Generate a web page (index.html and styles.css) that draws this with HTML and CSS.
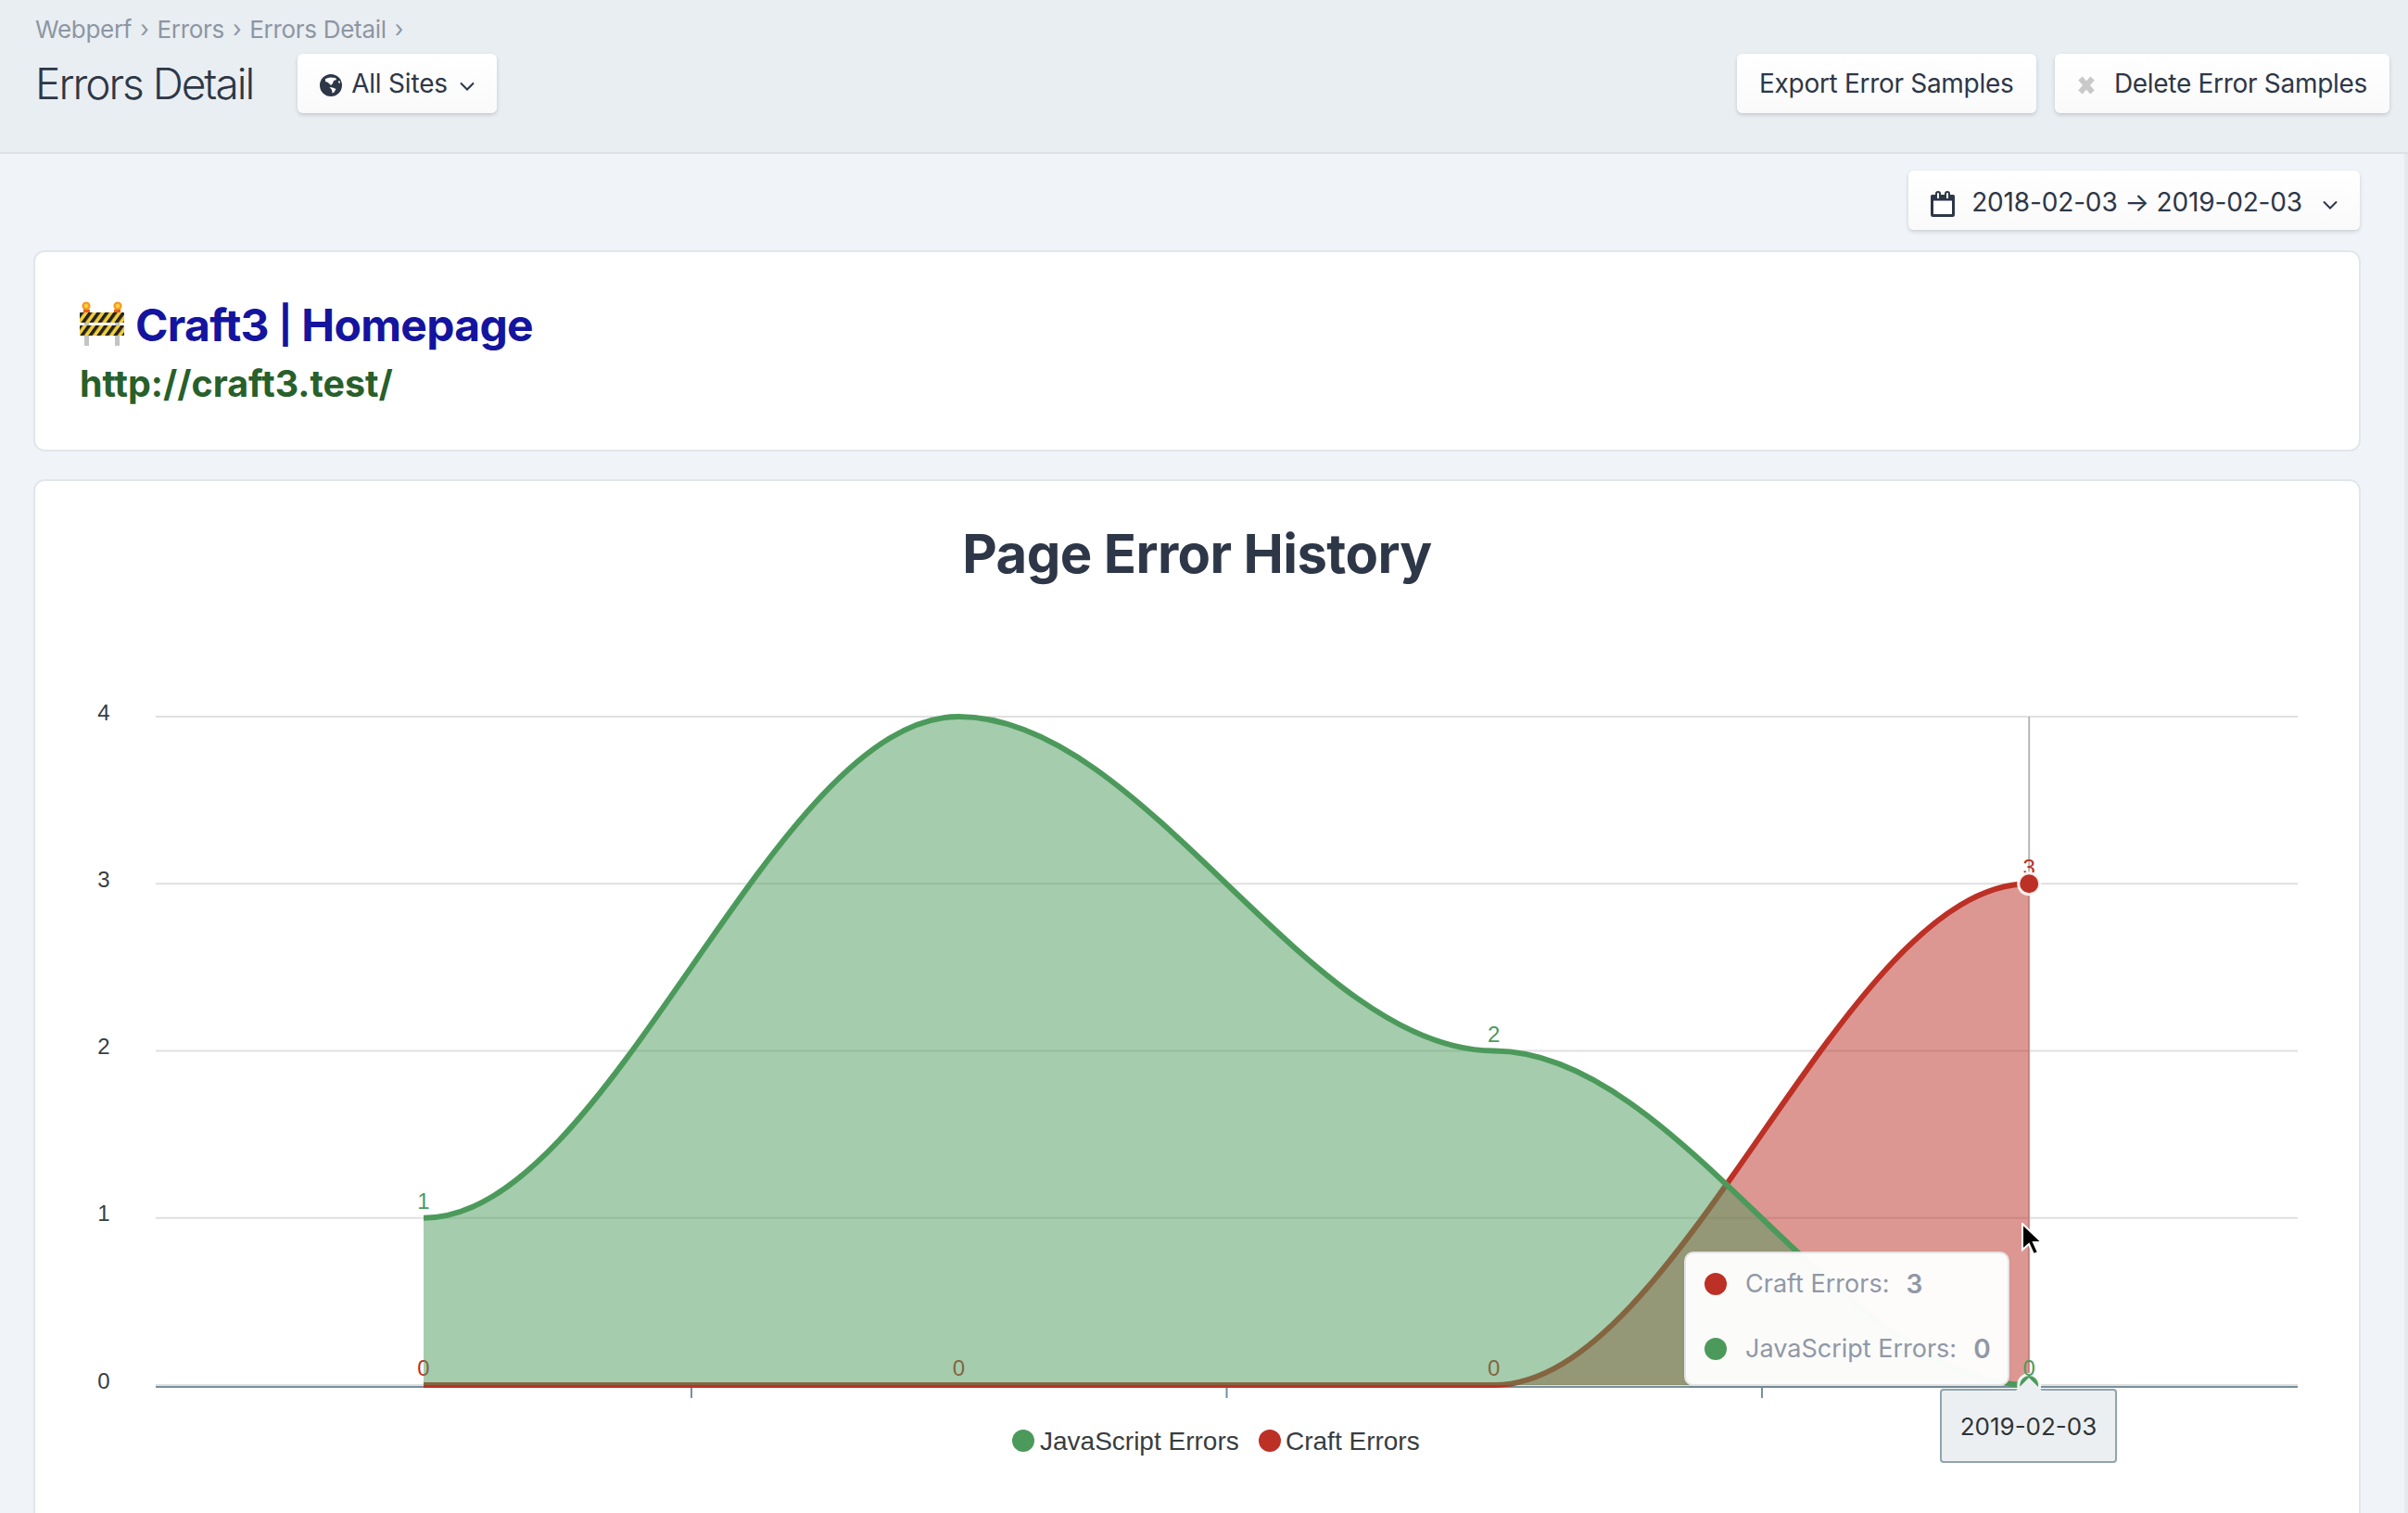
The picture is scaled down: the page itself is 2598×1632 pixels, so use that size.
FILE: index.html
```html
<!DOCTYPE html>
<html lang="en">
<head>
<meta charset="utf-8">
<title>Errors Detail</title>
<link rel="stylesheet" href="styles.css">
</head>
<body>
<div class="page">
  <header class="page-header">
    <nav class="crumbs">
      <span>Webperf</span><span class="sep">›</span>
      <span>Errors</span><span class="sep">›</span>
      <span>Errors Detail</span><span class="sep">›</span>
    </nav>
    <div class="title-row">
      <div class="title-left">
        <h1 class="page-title">Errors Detail</h1>
        <button class="btn btn-sites">
          <svg class="icon-globe" viewBox="0 0 24 24"><circle cx="12" cy="12" r="12" fill="#2d3748"/><path fill="#fff" d="M6 5l5-1.500 6 .5 1 2-3 1-1 3-2 2-2-2-2-1.500-2-.5zM10.500 14l3.500.5 3.500 1.500-2 3.500-2 1-.5-3.500zM20.500 7l1.500 1-.5 2-1.500-1z"/></svg>
          <span>All Sites</span>
          <svg class="icon-chev" viewBox="0 0 16 10"><path d="M1 1.500l7 7 7-7" fill="none" stroke="#2d3748" stroke-width="2"/></svg>
        </button>
      </div>
      <div class="title-actions">
        <button class="btn btn-export">Export Error Samples</button>
        <button class="btn btn-delete">
          <svg class="icon-x" viewBox="0 0 20 20"><path d="M3.500 2.500l13 15M16.500 2.500l-13 15" fill="none" stroke="#c9c9c9" stroke-width="6"/></svg>
          <span>Delete Error Samples</span>
        </button>
      </div>
    </div>
  </header>
  <main class="content">
    <div class="toolbar">
      <button class="btn btn-date">
        <svg class="icon-cal" viewBox="0 0 26 28"><path d="M1.500 8h23v17.500a1 1 0 0 1-1 1h-21a1 1 0 0 1-1-1z" fill="#fff" stroke="#2d3748" stroke-width="3"/><rect x="0" y="4" width="26" height="6.500" rx="1.500" fill="#2d3748"/><path d="M6 8V3a2 2 0 0 1 4 0v5M16 8V3a2 2 0 0 1 4 0v5" fill="#fff" stroke="#2d3748" stroke-width="2"/></svg>
        <span class="date-text">2018-02-03 → 2019-02-03</span>
        <svg class="icon-chev" viewBox="0 0 16 10"><path d="M1 1.500l7 7 7-7" fill="none" stroke="#2d3748" stroke-width="2"/></svg>
      </button>
    </div>
    <section class="card card-site">
      <h2 class="site-name">
        <svg class="icon-barrier" viewBox="0 0 48 48">
          <defs>
            <pattern id="stripes" width="9" height="9" patternUnits="userSpaceOnUse" patternTransform="skewX(-36)">
              <rect width="9" height="9" fill="#f0cf3a"/><rect width="4.500" height="9" fill="#26221c"/>
            </pattern>
          </defs>
          <rect x="5" y="22" width="5" height="26" fill="#c4c4c4"/>
          <rect x="38" y="22" width="5" height="26" fill="#c4c4c4"/>
          <circle cx="7" cy="5" r="4.600" fill="#f59a23"/><circle cx="7" cy="5" r="2.200" fill="#ffd23f"/>
          <circle cx="41" cy="5" r="4.600" fill="#f59a23"/><circle cx="41" cy="5" r="2.200" fill="#ffd23f"/>
          <rect x="4" y="9" width="7" height="4" fill="#ea5c1f"/><rect x="37" y="9" width="7" height="4" fill="#ea5c1f"/>
          <rect x="0" y="12" width="48" height="11" rx="1" fill="url(#stripes)"/>
          <rect x="0" y="26" width="48" height="11" rx="1" fill="url(#stripes)"/>
        </svg>
        <span>Craft3 <span class="pipe">|</span> Homepage</span>
      </h2>
      <p class="site-url">http://craft3.test/</p>
    </section>
    <section class="card card-chart">
      <svg class="chart" viewBox="38 519 2508 1140">
        <text class="chart-title" x="1291.500" y="618">Page Error History</text>

        <g class="grid">
          <path d="M168 773H2479M168 953.250H2479M168 1133.500H2479M168 1313.750H2479M168 1494H2479"/>
        </g>
        <path class="crosshair" d="M2189.200 773V1494"/>
        <path class="axis" d="M168 1496H2479M746 1496V1508M1323.500 1496V1508M1901 1496V1508"/>

        <g class="y-labels">
          <text x="112" y="777">4</text>
          <text x="112" y="957">3</text>
          <text x="112" y="1137">2</text>
          <text x="112" y="1317">1</text>
          <text x="112" y="1498">0</text>
        </g>

        <path class="area-craft" d="M457 1494C659 1494 832.400 1494 1034.400 1494C1236.400 1494 1409.800 1494 1611.800 1494C1813.800 1494 1987.200 953.250 2189.200 953.250V1494Z"/>
        <path class="line-craft" d="M457 1494C659 1494 832.400 1494 1034.400 1494C1236.400 1494 1409.800 1494 1611.800 1494C1813.800 1494 1987.200 953.250 2189.200 953.250"/>
        <g class="labels-craft">
          <text x="457" y="1484">0</text>
          <text x="1034.400" y="1484">0</text>
          <text x="1611.800" y="1484">0</text>
          <text x="2189.200" y="944">3</text>
        </g>

        <path class="area-js" d="M457 1313.750C659 1313.750 832.400 773 1034.400 773C1236.400 773 1409.800 1133.500 1611.800 1133.500C1813.800 1133.500 1987.200 1494 2189.200 1494H457Z"/>
        <path class="line-js" d="M457 1313.750C659 1313.750 832.400 773 1034.400 773C1236.400 773 1409.800 1133.500 1611.800 1133.500C1813.800 1133.500 1987.200 1494 2189.200 1494"/>
        <g class="labels-js">
          <text x="457" y="1304">1</text>
          <text x="1611.800" y="1124">2</text>
        </g>

        <circle class="marker marker-craft" cx="2189.200" cy="953.250" r="11.500"/>
        <circle class="marker marker-js" cx="2189.200" cy="1494" r="11.500"/>
        <text class="label-top" x="2189.200" y="1484">0</text>

        <g class="legend">
          <circle class="dot-js" cx="1104" cy="1554" r="12"/>
          <text x="1122" y="1564">JavaScript Errors</text>
          <circle class="dot-craft" cx="1370" cy="1554" r="12"/>
          <text x="1387" y="1564">Craft Errors</text>
        </g>
      </svg>

      <div class="tooltip">
        <div class="tooltip-row"><span class="tooltip-dot dot-red"></span><span>Craft Errors:</span><b>3</b></div>
        <div class="tooltip-row"><span class="tooltip-dot dot-green"></span><span>JavaScript Errors:</span><b>0</b></div>
      </div>
      <div class="x-tooltip">2019-02-03</div>
      <svg class="cursor" viewBox="0 0 24 38"><path d="M2 1v28l7-6 5 11 5-2-5-11h9z" fill="#000" stroke="#fff" stroke-width="2"/></svg>
    </section>
  </main>
</div>
</body>
</html>
```
FILE: styles.css
```css
* { box-sizing: border-box; }
html, body { margin: 0; padding: 0; height: 100%; overflow: hidden; }
body { font-family: Inter, "Noto Sans", sans-serif; color: #2d3748; background: #f0f4f8; }
.page { height: 1632px; overflow: hidden; display: flex; flex-direction: column; }

.page-header { height: 166px; flex: none; background: #e9eef2; border-bottom: 2px solid #dde1e6; padding: 14px 20px 0 38px; }
.crumbs { display: flex; align-items: center; gap: 9px; height: 34px; font-size: 26px; color: #8d96a3; letter-spacing: -0.3px; }
.crumbs .sep { font-size: 25px; }
.title-row { display: flex; justify-content: space-between; align-items: flex-start; margin-top: 10px; }
.title-left { display: flex; align-items: flex-start; gap: 48px; }
.page-title { margin: 0; font-size: 46px; line-height: 64px; font-weight: 300; letter-spacing: -2px; color: #2d3748; white-space: nowrap; }
.title-actions { display: flex; gap: 20px; }

.btn { height: 64px; display: inline-flex; align-items: center; padding: 0 24px; border: 0; border-radius: 6px; background: linear-gradient(#ffffff, #fafafa); box-shadow: 0 2px 4px rgba(0, 0, 0, .16); font-family: inherit; font-size: 28px; letter-spacing: -0.3px; color: #2d3748; white-space: nowrap; }
.btn svg { flex: none; }
.btn-sites { letter-spacing: -0.2px; }
.btn-export { padding: 0 24.5px; }
.btn-date { letter-spacing: -0.15px; }
.date-text { margin-top: 4px; }
.icon-globe { width: 24px; height: 24px; margin: 4px 10px 0 0; }
.icon-chev { width: 16px; height: 10px; margin: 6px 0 0 13px; }
.btn-date .icon-chev { margin: 10px 0 0 22px; }
.icon-x { width: 20px; height: 20px; margin: 4px 20px 0 0; }
.icon-cal { width: 26px; height: 28px; margin: 8px 18px 0 0; }

.content { flex: 1; padding: 18px 47px 0 36px; border-right: 4px solid #e6e9ee; display: flex; flex-direction: column; gap: 22px; }
.toolbar { display: flex; justify-content: flex-end; padding-right: 1px; }
.card { background: #fff; border: 2px solid #e2e6ea; border-radius: 12px; }
.card-site { height: 217px; padding: 47px 48px 0; flex: none; }
.site-name { margin: 0; display: flex; align-items: center; gap: 12px; font-size: 48px; line-height: 64px; font-weight: 700; color: #14149f; letter-spacing: -0.7px; }
.pipe { font-size: 40px; vertical-align: 3px; }
.icon-barrier { width: 48px; height: 48px; flex: none; margin-top: -4px; }
.site-url { margin: 6px 0 0; font-size: 39.4px; line-height: 50px; font-weight: 700; color: #27602a; }

.card-chart { position: relative; flex: none; height: 1200px; margin-top: 8px; }
.chart { display: block; width: 2508px; height: 1140px; }
.chart-title { font-family: Inter, sans-serif; font-size: 58px; font-weight: 700; text-anchor: middle; fill: #2d3748; letter-spacing: -0.6px; }
.grid path { stroke: #e0e0e0; stroke-width: 2; fill: none; }
.crosshair { stroke: #b6b6b6; stroke-width: 2; fill: none; }
.axis { stroke: #78909c; stroke-width: 2; fill: none; }
.y-labels text { font-family: "Liberation Sans", Arial, sans-serif; font-size: 24px; text-anchor: middle; fill: #373d3f; }
.area-craft { fill: #bc3025; fill-opacity: .5; }
.area-js { fill: #4c9a5b; fill-opacity: .5; }
.line-craft { fill: none; stroke: #bc3025; stroke-width: 6; }
.line-js { fill: none; stroke: #4c9a5b; stroke-width: 6; }
.labels-craft text, .labels-js text, .label-top { font-family: "Liberation Sans", Arial, sans-serif; font-size: 24px; text-anchor: middle; }
.labels-craft text { fill: #bc3025; }
.labels-js text, .label-top { fill: #4c9a5b; }
.marker { stroke: #fff; stroke-width: 3; stroke-opacity: .9; }
.marker-craft { fill: #bc3025; }
.marker-js { fill: #4c9a5b; }
.legend text { font-family: "Liberation Sans", Arial, sans-serif; font-size: 28px; fill: #373d3f; }
.dot-js { fill: #4c9a5b; }
.dot-craft { fill: #bc3025; }

.tooltip { position: absolute; left: 1779px; top: 831px; width: 351px; height: 145px; display: flex; flex-direction: column; justify-content: center; gap: 30px; padding: 0 0 6px 20px; background: rgba(255, 255, 255, .96); border: 2px solid #e3e3e3; border-radius: 10px; font-size: 27px; color: #8f98a6; box-shadow: 0 2px 4px rgba(0, 0, 0, .06); }
.tooltip-row { display: flex; align-items: center; height: 40px; white-space: nowrap; }
.tooltip-row b { font-size: 28px; font-weight: 600; margin-left: 18px; }
.tooltip-dot { width: 24px; height: 24px; border-radius: 50%; margin-right: 20px; }
.dot-red { background: #bc3025; }
.dot-green { background: #4c9a5b; }

.x-tooltip { position: absolute; left: 2055px; top: 979px; width: 191px; height: 80px; display: flex; align-items: center; justify-content: center; background: #eceff1; border: 2px solid #90a4ae; border-radius: 4px; font-size: 26px; color: #2f3437; }
.x-tooltip::before { content: ""; position: absolute; left: 80px; top: -14px; width: 0; height: 0; border-left: 14px solid transparent; border-right: 14px solid transparent; border-bottom: 14px solid #eceff1; }
.cursor { position: absolute; left: 2142px; top: 800px; width: 24px; height: 38px; }
```
